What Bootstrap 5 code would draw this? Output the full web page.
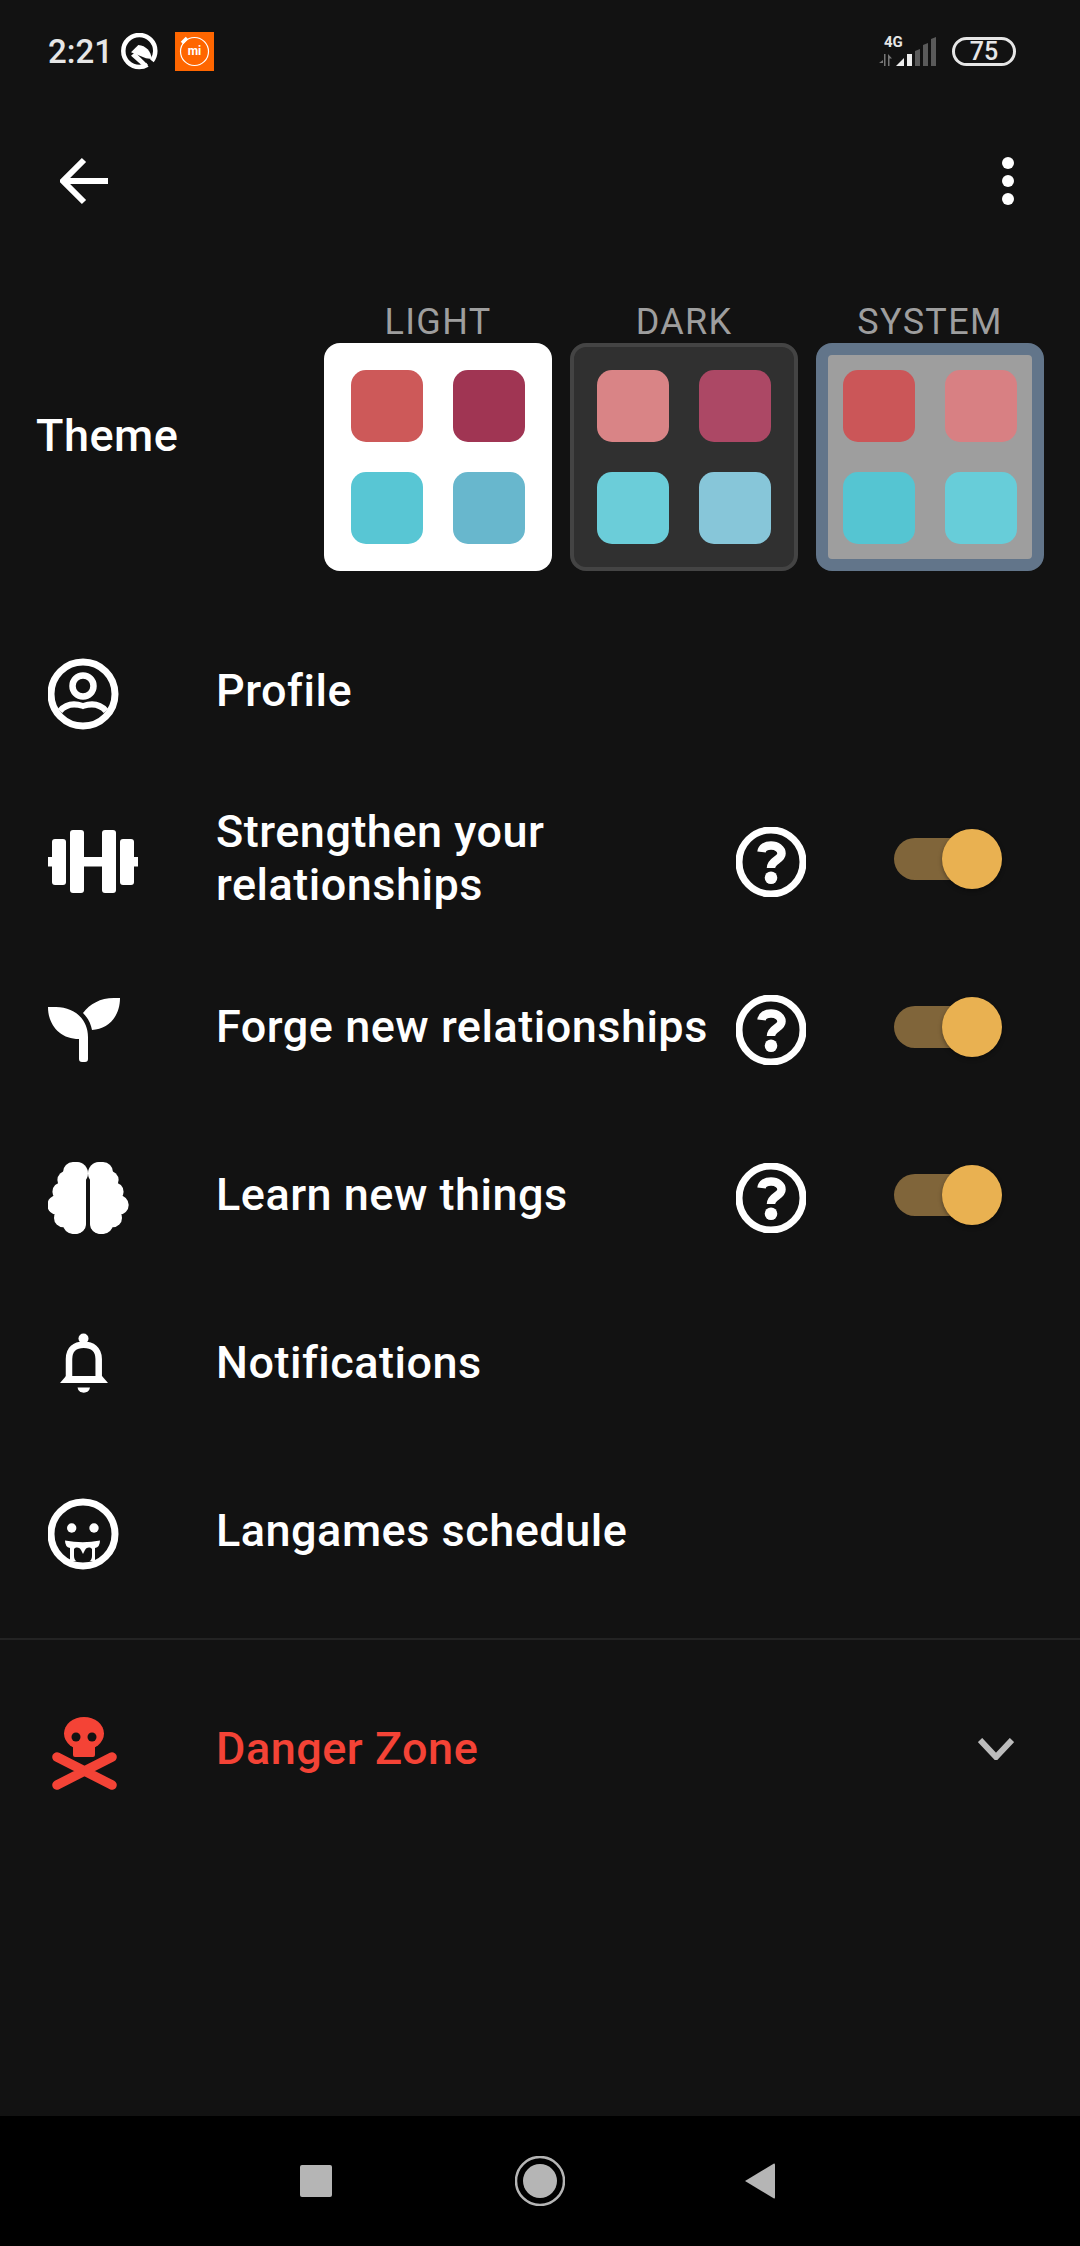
<!DOCTYPE html>
<html lang="en">
<head>
  <meta charset="UTF-8">
  <title>Settings</title>
  <meta name="viewport" content="width=device-width, initial-scale=1">
  <link href="https://cdn.jsdelivr.net/npm/bootstrap@5.3.3/dist/css/bootstrap.min.css" rel="stylesheet">
  <style>
    body {
      font-family: Roboto, "Liberation Sans", sans-serif;
      background: #121212;
      color: #fff;
    }
    .phone { width: 1080px; height: 2246px; }
    svg { display: block; flex-shrink: 0; }

    .status-bar { height: 103px; padding: 0 64px 0 48px; color: #e6e6e6; }
    .status-time { font-size: 33px; font-weight: 500; line-height: 1; margin-right: 8px; }
    .mi-icon { margin-left: 17px; }
    .battery-pill {
      width: 64px; height: 29px;
      border: 3px solid #e6e6e6; border-radius: 15px;
      font-size: 25px; font-weight: 500; line-height: 1;
      margin-left: 16px;
    }

    .app-bar { height: 155px; padding: 0 66px 0 60px; }

    .theme-section { height: 271px; margin-top: 42px; padding: 0 36px; }
    .theme-title { font-size: 45px; font-weight: 500; letter-spacing: 0.500px; }
    .theme-options { gap: 18px; }
    .theme-label {
      height: 43px; line-height: 44px;
      font-size: 36px; letter-spacing: 1.300px; color: #9e9e9e;
    }
    .theme-tile { width: 228px; height: 228px; border-radius: 16px; }
    .tile-light { background: #fff; }
    .tile-dark { background: #303030; border: 4px solid #444; }
    .tile-system { background: #9e9e9e; border: 12px solid #62758a; }
    .swatches { grid-template-columns: 72px 72px; grid-auto-rows: 72px; gap: 30px; }
    .swatch { border-radius: 15px; }

    .menu-list { margin-top: 36px; }
    .menu-row { height: 168px; padding-left: 48px; }
    .menu-icon { width: 120px; height: 120px; margin-right: 48px; }
    .menu-text { font-size: 45px; font-weight: 500; letter-spacing: 0.500px; line-height: 53px; width: 520px; padding-bottom: 2px; }
    .help-icon { margin-top: 6px; }
    .menu-switch {
      position: relative; display: block;
      width: 84px; height: 42px; margin-left: 88px;
      background: #80653a; border-radius: 21px;
    }
    .menu-switch::after {
      content: ""; position: absolute; top: -9px; left: 48px;
      width: 60px; height: 60px; border-radius: 50%;
      background: #e9b151; box-shadow: 0 2px 4px rgba(0,0,0,.35);
    }

    .menu-divider { height: 2px; margin: 23px 0 25px; background: #232323; }
    .danger-text { color: #f44336; }
    .danger-chevron { margin-left: 242px; }

    .nav-bar { height: 130px; background: #000; padding-right: 5px; }
    .nav-circle { margin: 0 180px 0 183px; }
  </style>
</head>
<body>
<div class="phone d-flex flex-column">

  <div class="status-bar d-flex align-items-center justify-content-between">
    <div class="d-flex align-items-center">
      <span class="status-time">2:21</span>
      <svg width="37" height="37" viewBox="0 0 37 37">
        <circle cx="18.300" cy="18" r="16" fill="none" stroke="#fff" stroke-width="4.500" stroke-dasharray="10.500 6 84"/>
        <path d="M10 19.300 17.300 12C25 12.700 30 18 30.700 26L25 25.300Z" fill="#fff"/>
        <path d="M10 22.700 14 19.300 27 32H20.500Z" fill="#fff"/>
      </svg>
      <svg class="mi-icon" width="39" height="39" viewBox="0 0 39 39">
        <rect width="39" height="39" fill="#ff6600"/>
        <circle cx="19.500" cy="19.500" r="14" fill="none" stroke="#fff" stroke-width="1.200"/>
        <path d="M7 11 12 6" stroke="#fff" stroke-width="3.500"/>
        <text x="19.500" y="23" text-anchor="middle" font-family="Roboto, sans-serif" font-size="12" font-weight="700" fill="#fff">mi</text>
      </svg>
    </div>
    <div class="d-flex align-items-center">
      <svg width="57" height="40" viewBox="879 31 57 40">
        <text x="884" y="46" font-family="Roboto, sans-serif" font-size="15" font-weight="700" fill="#e6e6e6">4G</text>
        <path d="M883 59 879 62H883ZM884 53H885.500V65H884ZM888 53V65H889.500V57.500L892 57.500Z" fill="#777"/>
        <path d="M896 65 904 57V65Z" fill="#eee"/>
        <rect x="907" y="53" width="5" height="12" fill="#eee"/>
        <path d="M915 50 920 48V65H915ZM923 44 928 42V65H923ZM931 38 936 36V65H931Z" fill="#5a5a5a"/>
      </svg>
      <div class="battery-pill d-flex align-items-center justify-content-center">75</div>
    </div>
  </div>

  <div class="app-bar d-flex align-items-center justify-content-between">
    <svg width="48" height="48" viewBox="0 0 48 48" fill="none" stroke="#fff" stroke-width="6">
      <path d="M48 24H4M24 3 3 24 24 45"/>
    </svg>
    <svg width="12" height="48" viewBox="0 0 12 48" fill="#fff">
      <circle cx="6" cy="6" r="6"/><circle cx="6" cy="24" r="6"/><circle cx="6" cy="42" r="6"/>
    </svg>
  </div>

  <div class="theme-section d-flex align-items-center justify-content-between">
    <div class="theme-title">Theme</div>
    <div class="theme-options d-flex">
      <div class="text-center">
        <div class="theme-label">LIGHT</div>
        <div class="theme-tile tile-light d-flex align-items-center justify-content-center">
          <div class="swatches d-grid">
            <div class="swatch" style="background:#cd5959"></div>
            <div class="swatch" style="background:#a03553"></div>
            <div class="swatch" style="background:#58c6d4"></div>
            <div class="swatch" style="background:#68b7cd"></div>
          </div>
        </div>
      </div>
      <div class="text-center">
        <div class="theme-label">DARK</div>
        <div class="theme-tile tile-dark d-flex align-items-center justify-content-center">
          <div class="swatches d-grid">
            <div class="swatch" style="background:#d98486"></div>
            <div class="swatch" style="background:#ac4865"></div>
            <div class="swatch" style="background:#6bcdd9"></div>
            <div class="swatch" style="background:#87c6d9"></div>
          </div>
        </div>
      </div>
      <div class="text-center">
        <div class="theme-label">SYSTEM</div>
        <div class="theme-tile tile-system d-flex align-items-center justify-content-center">
          <div class="swatches d-grid">
            <div class="swatch" style="background:#cb5658"></div>
            <div class="swatch" style="background:#d88083"></div>
            <div class="swatch" style="background:#55c5d2"></div>
            <div class="swatch" style="background:#67cdd9"></div>
          </div>
        </div>
      </div>
    </div>
  </div>

  <svg width="0" height="0" class="position-absolute">
    <defs>
      <g id="help-glyph">
        <circle cx="35" cy="35" r="32" fill="none" stroke="#fff" stroke-width="7"/>
        <path d="M25.500 25C26 20.500 30 18.500 35 18.500C41 18.500 45.500 22 45.500 26.500C45.500 33 35 33 35 41" fill="none" stroke="#fff" stroke-width="8.500"/>
        <circle cx="35" cy="50.700" r="6.300" fill="#fff"/>
      </g>
      <g id="brain-half">
        <circle cx="28.700" cy="38.300" r="11.300"/><circle cx="18.700" cy="45" r="9.300"/>
        <circle cx="13.700" cy="56.700" r="9.300"/><circle cx="9.300" cy="70" r="10"/>
        <circle cx="15.300" cy="83" r="9.300"/><circle cx="27" cy="88.300" r="10.700"/>
        <rect x="15" y="27" width="23" height="72" rx="10"/>
        <rect x="12" y="45" width="14" height="40"/>
      </g>
    </defs>
  </svg>

  <div class="menu-list">
    <div class="menu-row d-flex align-items-center">
      <svg class="menu-icon" viewBox="0 0 120 120" fill="none" stroke="#fff">
        <circle cx="35" cy="63" r="32" stroke-width="7"/>
        <circle cx="35" cy="55" r="10.500" stroke-width="6.500"/>
        <path d="M12 80C18 73 26 72 35 75C44 72 52 73 58 80" stroke-width="6"/>
      </svg>
      <div class="menu-text">Profile</div>
    </div>

    <div class="menu-row d-flex align-items-center">
      <svg class="menu-icon" viewBox="0 0 120 120" fill="#fff">
        <rect x="0" y="58" width="5" height="9.500"/>
        <rect x="85" y="58" width="5" height="9.500"/>
        <rect x="30" y="58" width="30" height="9.500"/>
        <rect x="4" y="40" width="14" height="46" rx="3"/>
        <rect x="22" y="31" width="14" height="63" rx="3"/>
        <rect x="54" y="31" width="14" height="63" rx="3"/>
        <rect x="72" y="40" width="14" height="46" rx="3"/>
      </svg>
      <div class="menu-text">Strengthen your relationships</div>
      <svg class="help-icon" width="70" height="70" viewBox="0 0 70 70"><use href="#help-glyph"/></svg>
      <span class="menu-switch"></span>
    </div>

    <div class="menu-row d-flex align-items-center">
      <svg class="menu-icon" viewBox="0 0 120 120" fill="#fff">
        <path d="M0 40H8C26 40 40 52 40 70V92Q40 95 37 95H34Q31 95 31 92V72C12 72 0 58 0 40Z"/>
        <path d="M72 31H66C52 31 42 37 35 46C40 51 43 57 44 63C60 62 72 50 72 31Z"/>
      </svg>
      <div class="menu-text">Forge new relationships</div>
      <svg class="help-icon" width="70" height="70" viewBox="0 0 70 70"><use href="#help-glyph"/></svg>
      <span class="menu-switch"></span>
    </div>

    <div class="menu-row d-flex align-items-center">
      <svg class="menu-icon" viewBox="0 0 120 120" fill="#fff">
        <use href="#brain-half"/>
        <use href="#brain-half" transform="matrix(-1 0 0 1 80 0)"/>
      </svg>
      <div class="menu-text">Learn new things</div>
      <svg class="help-icon" width="70" height="70" viewBox="0 0 70 70"><use href="#help-glyph"/></svg>
      <span class="menu-switch"></span>
    </div>

    <div class="menu-row d-flex align-items-center">
      <svg class="menu-icon" viewBox="0 0 120 120" fill="#fff">
        <circle cx="35.500" cy="35.500" r="5"/>
        <path d="M21 74V56C21 46 27 41.700 35.700 41.700C44 41.700 50.700 46 50.700 56V74" fill="none" stroke="#fff" stroke-width="6.500"/>
        <path d="M12 80 18 73H54L60 80Z"/>
        <path d="M29.500 84.500H42A6.300 6 0 0 1 29.500 84.500Z"/>
      </svg>
      <div class="menu-text">Notifications</div>
    </div>

    <div class="menu-row d-flex align-items-center">
      <svg class="menu-icon" viewBox="0 0 120 120" fill="#fff">
        <path d="M17 69.500Q35 73 52 69.500Q52 76 47 77V90H22V77Q17 76 17 69.500Z"/>
        <path d="M26 78C28 76 31 76 33 79L35 83L37 79C39 76 42 76 44 78V85C44 90 40 92 35 92C30 92 26 90 26 85Z" fill="#121212"/>
        <circle cx="35" cy="63" r="32" fill="none" stroke="#fff" stroke-width="7"/>
        <circle cx="23.700" cy="57" r="4.700"/><circle cx="46" cy="57" r="4.700"/>
      </svg>
      <div class="menu-text">Langames schedule</div>
    </div>
  </div>

  <div class="menu-divider"></div>

  <div class="menu-row d-flex align-items-center">
    <svg class="menu-icon" viewBox="0 0 120 120" fill="#f44336">
      <ellipse cx="36" cy="44.500" rx="20" ry="16.500"/>
      <rect x="25" y="55" width="22" height="13" rx="2"/>
      <circle cx="28" cy="48" r="4.500" fill="#121212"/>
      <circle cx="44" cy="48" r="4.500" fill="#121212"/>
      <path d="M9 68 64 96M64 68 9 96" stroke="#f44336" stroke-width="9.500" stroke-linecap="round"/>
    </svg>
    <div class="menu-text danger-text">Danger Zone</div>
    <svg class="danger-chevron" width="36" height="22" viewBox="0 0 36 22" fill="none" stroke="#bdbdbd" stroke-width="6">
      <path d="M2 2 18 19 34 2"/>
    </svg>
  </div>

  <div class="flex-grow-1"></div>

  <div class="nav-bar d-flex align-items-center justify-content-center">
    <svg width="32" height="32" viewBox="0 0 32 32"><rect width="32" height="32" rx="2" fill="#b5b5b5"/></svg>
    <svg class="nav-circle" width="50" height="50" viewBox="0 0 50 50">
      <circle cx="25" cy="25" r="24" fill="none" stroke="#b5b5b5" stroke-width="2.500"/>
      <circle cx="25" cy="25" r="17" fill="#b5b5b5"/>
    </svg>
    <svg width="30" height="36" viewBox="0 0 30 36"><path d="M0 18 29 0.500Q30 0 30 2V34Q30 36 29 35.500Z" fill="#b5b5b5"/></svg>
  </div>
</div>
<script src="https://cdn.jsdelivr.net/npm/bootstrap@5.3.3/dist/js/bootstrap.bundle.min.js"></script>
</body>
</html>
